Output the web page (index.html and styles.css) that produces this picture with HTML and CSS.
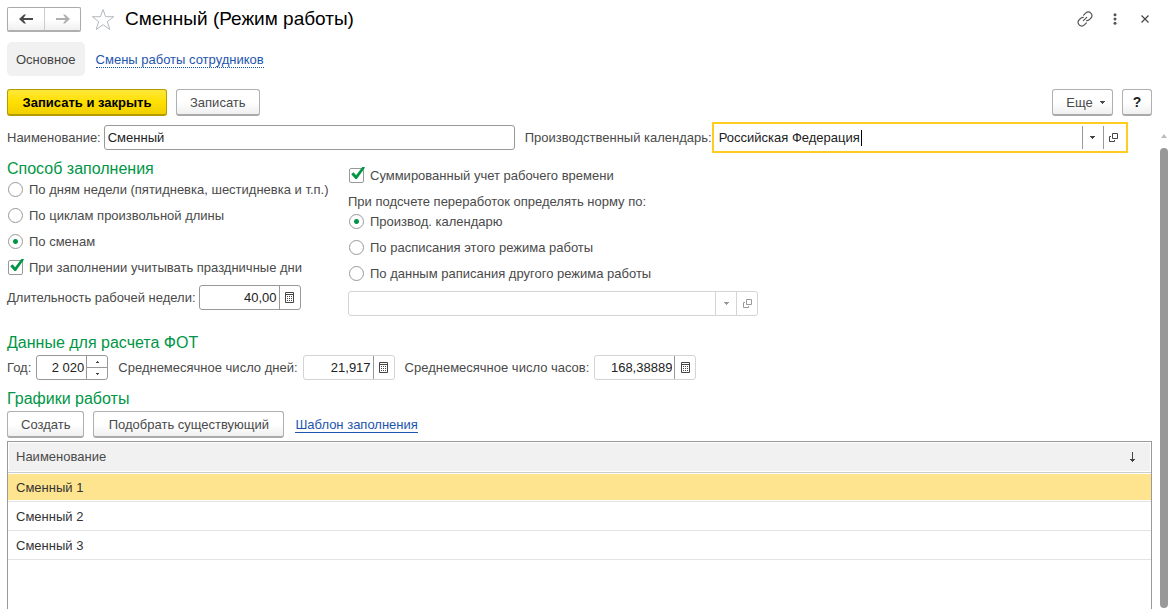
FILE: index.html
```html
<!DOCTYPE html>
<html lang="ru">
<head>
<meta charset="utf-8">
<title>Сменный (Режим работы)</title>
<link rel="stylesheet" href="styles.css">
</head>
<body>
<svg class="defs" aria-hidden="true">
  <symbol id="calc" viewBox="0 0 9 11"><path fill="none" stroke="currentColor" d="M.5.5h8v10h-8zM0 2.500h9"/><path fill="currentColor" d="M2 4h1v1H2zM4 4h1v1H4zM6 4h1v1H6zM2 6h1v1H2zM4 6h1v1H4zM6 6h1v1H6zM2 8h1v1H2zM4 8h1v1H4zM6 8h1v1H6z"/></symbol>
  <symbol id="open" viewBox="0 0 9 9"><path fill="none" stroke="currentColor" d="M3.500.500h5v5h-5zM2 3.500H.500v5h5V7"/></symbol>
  <symbol id="down" viewBox="0 0 5 3"><path fill="currentColor" d="M0 0h5v1H4v1H3v1H2V2H1V1H0z"/></symbol>
  <symbol id="tick" viewBox="0 0 17 17"><path fill="#009646" d="M3.200 8.200l2.300-2 2.600 3L14.300 1h2.400v1L8.900 13H7.500z"/></symbol>
</svg>
<div class="page">
  <header class="titlebar">
    <div class="history">
      <button type="button" aria-label="Назад"><svg width="14" height="10" viewBox="0 0 14 10"><path fill="#4a4a4a" d="M0 5l5-4.500h2L4.500 4H14v2H4.500L7 9.500H5z"/></svg></button>
      <button type="button" aria-label="Вперед"><svg width="14" height="10" viewBox="0 0 14 10"><path fill="#b0b0b0" d="M14 5L9 .5H7L9.500 4H0v2h9.500L7 9.500h2z"/></svg></button>
    </div>
    <button type="button" class="bare" aria-label="В избранное"><svg width="24" height="23" viewBox="0 0 24 23"><path fill="none" stroke="#b3b9c0" d="M12 1.500l2.600 7.200h8.100l-6.400 4.900 2.500 7.900-6.800-4.800-6.800 4.800 2.500-7.900-6.400-4.900h8.100z"/></svg></button>
    <h1>Сменный (Режим работы)</h1>
    <div class="window-tools">
      <button type="button" class="bare" aria-label="Ссылка"><svg width="16" height="16" viewBox="0 0 16 16"><g fill="none" stroke="#555" stroke-width="1.200" stroke-linecap="round"><path d="M6.600 4.200l2.300-2.300a3.300 3.300 0 0 1 4.700 0l.4.400a3.300 3.300 0 0 1 0 4.700l-1.700 1.700a3.300 3.300 0 0 1-2.600 1"/><path d="M9.400 11.800l-2.300 2.300a3.300 3.300 0 0 1-4.700 0l-.4-.4a3.300 3.300 0 0 1 0-4.700l1.700-1.700a3.300 3.300 0 0 1 2.600-1"/><path d="M6.300 9.700l3.400-3.400"/></g></svg></button>
      <button type="button" class="bare" aria-label="Меню"><svg width="4" height="12" viewBox="0 0 4 12"><g fill="#555"><circle cx="2" cy="1.800" r="1.500"/><circle cx="2" cy="6" r="1.500"/><circle cx="2" cy="10.200" r="1.500"/></g></svg></button>
      <button type="button" class="bare" aria-label="Закрыть"><svg width="8" height="8" viewBox="0 0 8 8"><path fill="none" stroke="#444" stroke-width="1.200" d="M.5.5l7 7M7.500.5l-7 7"/></svg></button>
    </div>
  </header>

  <nav class="tabs">
    <a class="tab current">Основное</a>
    <a class="tab-link" href="#shifts">Смены работы сотрудников</a>
  </nav>

  <div class="commands">
    <button type="button" class="btn primary">Записать и закрыть</button>
    <button type="button" class="btn">Записать</button>
    <span class="spacer"></span>
    <button type="button" class="btn more">Еще <svg width="5" height="3"><use href="#down"/></svg></button>
    <button type="button" class="btn help">?</button>
  </div>

  <div class="body">
    <main class="form">
      <div class="fields tight">
        <label for="name">Наименование:</label>
        <div class="box name"><input id="name" type="text" value="Сменный"></div>
        <label class="next" for="calendar">Производственный календарь:</label>
        <div class="box calendar">
          <input id="calendar" type="text" value="Российская Федерация"><span class="caret"></span>
          <button type="button" class="first" aria-label="Выбрать"><svg width="5" height="3"><use href="#down"/></svg></button>
          <button type="button" aria-label="Открыть"><svg width="9" height="9"><use href="#open"/></svg></button>
        </div>
      </div>

      <div class="columns">
        <section class="method">
          <h2>Способ заполнения</h2>
          <label class="choice"><input type="radio" name="fill">По дням недели (пятидневка, шестидневка и т.п.)</label>
          <label class="choice"><input type="radio" name="fill">По циклам произвольной длины</label>
          <label class="choice"><input type="radio" name="fill" checked>По сменам</label>
          <label class="choice"><input type="checkbox" checked><svg class="tick" width="17" height="17"><use href="#tick"/></svg>При заполнении учитывать праздничные дни</label>
          <div class="fields tight week">
            <label for="week">Длительность рабочей недели:</label>
            <div class="box number"><input id="week" type="text" value="40,00"><button type="button" aria-label="Калькулятор"><svg width="9" height="11"><use href="#calc"/></svg></button></div>
          </div>
        </section>
        <section class="overtime">
          <label class="choice"><input type="checkbox" checked><svg class="tick" width="17" height="17"><use href="#tick"/></svg>Суммированный учет рабочего времени</label>
          <p>При подсчете переработок определять норму по:</p>
          <label class="choice"><input type="radio" name="norm" checked>Производ. календарю</label>
          <label class="choice"><input type="radio" name="norm">По расписания этого режима работы</label>
          <label class="choice"><input type="radio" name="norm">По данным раписания другого режима работы</label>
          <div class="box muted other">
            <input type="text" aria-label="Другой режим работы" disabled>
            <button type="button" aria-label="Выбрать" disabled><svg width="5" height="3"><use href="#down"/></svg></button>
            <button type="button" aria-label="Открыть" disabled><svg width="9" height="9"><use href="#open"/></svg></button>
          </div>
        </section>
      </div>

      <h2>Данные для расчета ФОТ</h2>
      <div class="fields">
        <label for="year">Год:</label>
        <div class="box year"><input id="year" type="text" value="2 020">
          <div class="spin">
            <button type="button" aria-label="Больше"><svg width="3" height="2" viewBox="0 0 3 2"><path fill="#444" d="M1 0h1v1h1v1H0V1h1z"/></svg></button>
            <button type="button" aria-label="Меньше"><svg width="3" height="2" viewBox="0 0 3 2"><path fill="#444" d="M0 0h3v1H2v1H1V1H0z"/></svg></button>
          </div>
        </div>
        <label class="next" for="days">Среднемесячное число дней:</label>
        <div class="box pale days"><input id="days" type="text" value="21,917"><button type="button" aria-label="Калькулятор"><svg width="9" height="11"><use href="#calc"/></svg></button></div>
        <label class="next" for="hours">Среднемесячное число часов:</label>
        <div class="box pale number"><input id="hours" type="text" value="168,38889"><button type="button" aria-label="Калькулятор"><svg width="9" height="11"><use href="#calc"/></svg></button></div>
      </div>

      <h2 class="schedules">Графики работы</h2>
      <div class="commands inner">
        <button type="button" class="btn">Создать</button>
        <button type="button" class="btn pick">Подобрать существующий</button>
        <a class="template" href="#template">Шаблон заполнения</a>
      </div>
      <div class="list">
        <table>
          <thead><tr><th><div class="head">Наименование<svg width="7" height="11" viewBox="0 0 7 11"><path fill="#444" d="M3 0h1v7h2v1H5v1H4v1H3V9H2V8H1V7h2z"/></svg></div></th></tr></thead>
          <tbody>
            <tr class="selected"><td>Сменный 1</td></tr>
            <tr><td>Сменный 2</td></tr>
            <tr><td>Сменный 3</td></tr>
          </tbody>
        </table>
      </div>
    </main>
    <div class="scrollbar"><svg width="6" height="4" viewBox="0 0 6 4"><path fill="#bbb" d="M3 0l3 4H0z"/></svg><div class="thumb"></div></div>
  </div>
</div>
</body>
</html>
```

FILE: styles.css
```css
* { box-sizing: border-box; }
body { margin: 0; background: #fff; color: #4a4a4a; font: 13px/16px "Liberation Sans", Arial, sans-serif; }
button, input { font: inherit; color: inherit; margin: 0; padding: 0; }
button { display: flex; align-items: center; justify-content: center; background: none; border: 0; }
svg { display: block; flex: none; }
.defs { position: absolute; width: 0; height: 0; }

.page { display: flex; flex-direction: column; height: 100vh; overflow: hidden; }

.titlebar { display: flex; align-items: center; height: 38px; padding: 0 21px 0 7px; }
.history { display: flex; height: 25px; border: 1px solid #aaa; border-bottom: 2px solid #b0b0b0; border-radius: 2px; background: linear-gradient(#fff 50%, #f0f0f0); }
.history button { width: 36px; }
.history button + button { border-left: 1px solid #ccc; }
.history + .bare { margin: 0 10px; }
h1 { flex: 1; margin: 0; font-size: 19px; line-height: 22px; font-weight: normal; color: #000; }
.window-tools { display: flex; align-items: center; gap: 24px; }
.window-tools .bare:first-child { margin-right: -4px; }

.tabs { display: flex; align-items: center; gap: 11px; margin: 4px 7px 13px; }
.tab { padding: 10px 9px 8px; border-radius: 5px; background: #f1f1f1; color: #444; }
.tab-link { padding-top: 1px; color: #1c55ae; text-decoration: none; border-bottom: 1px dotted #1c55ae; line-height: 15px; }

.commands { display: flex; align-items: center; gap: 9px; padding: 0 18px 0 7px; }
.spacer { flex: 1; }
.btn { height: 27px; padding: 1px 13px 0; border: 1px solid #b0b0b0; border-bottom: 2px solid #aaa; border-radius: 3px; background: linear-gradient(#fff 50%, #f0f0f0); }
.primary { min-width: 160px; border-color: #b59b00; background: linear-gradient(#ffe83a, #ffe000 50%, #f0cf00); color: #000; font-weight: bold; }
.more { gap: 7px; min-width: 61px; padding: 1px 6px 0 12px; }
.help { width: 30px; padding: 0; color: #222; font-size: 14px; font-weight: bold; }
.pick { min-width: 191px; }

.body { display: flex; flex: 1; min-height: 0; margin-top: 6px; }
.form { display: flex; flex-direction: column; flex: 1; padding-left: 7px; }
.fields { display: flex; align-items: center; gap: 5px; }
.tight { gap: 3px; }
.next { margin-left: 5px; }
.tight .next { margin-left: 7px; }
.box { display: flex; height: 25px; border: 1px solid #999; border-radius: 3px; background: #fff; }
.box input { flex: 1; width: 0; min-width: 0; padding: 0 3px; border: 0; outline: 0; background: none; color: #222; }
.box button { width: 21px; border-left: 1px solid #999; color: #444; }
.name { width: 411px; }
.calendar { align-items: center; width: 416px; height: 31px; margin-left: -3px; padding-right: 2px; border: 2px solid #fc2; border-radius: 0; }
.calendar input { flex: none; width: 147px; padding: 0 0 0 5px; }
.caret { width: 1px; height: 16px; background: #000; }
.calendar button { height: 23px; }
.calendar .first { margin-left: auto; }
.number { width: 102px; }
.number input, .days input, .year input { padding: 0 2px; text-align: right; }
.days { width: 92px; }
.year { width: 72px; }
.muted, .pale { border-color: #d4d4d4; }
.muted button { border-color: #d4d4d4; color: #999; }
.spin { display: flex; flex-direction: column; width: 21px; border-left: 1px solid #999; }
.spin button { flex: 1; width: auto; border: 0; }
.spin button + button { border-top: 1px solid #999; }

.columns { display: flex; margin-top: 7px; }
.method { width: 341px; }
h2 { margin: 0; font-size: 16px; line-height: 17px; font-weight: normal; color: #009646; }
.choice { display: flex; align-items: center; height: 26px; }
.choice input { flex: none; appearance: none; width: 15px; height: 15px; margin: 0 6px 1px 1px; border: 1px solid #999; background: #fff; }
.choice input[type="radio"] { border-radius: 50%; }
.choice input[type="radio"]:checked { background: radial-gradient(circle, #009646 2px, #fff 3px); }
.choice input[type="checkbox"] { border-radius: 2px; }
.tick { margin: -3px 5px 0 -22px; }
.week { margin-top: 4px; }
.overtime { padding-top: 3px; }
.overtime p { margin: 5px 0 -1px; line-height: 16px; }
.other { width: 410px; margin-top: 4px; }
.columns + h2 { margin-top: 18px; margin-bottom: 4px; }
.schedules { margin: 10px 0 4px; }
.inner { padding: 0; }
.template { margin-left: 2px; color: #1c55ae; text-decoration: none; border-bottom: 1px solid #1c55ae; line-height: 15px; }

.list { flex: 1; margin: 3px 0 0; border: 1px solid #999; border-bottom: 0; }
table { width: 100%; border-collapse: collapse; }
th { padding: 1px 1px; border-bottom: 1px solid #ccc; font-weight: normal; text-align: left; }
.head { display: flex; align-items: center; justify-content: space-between; height: 28px; padding: 0 14px 0 7px; background: #f1f1f1; }
td { height: 29px; padding: 1px 8px 0; border-bottom: 1px solid #e4e4e4; color: #333; }
.selected td { background: #ffe48f; box-shadow: inset 0 1px #fff, inset 0 -1px #fff; }

.scrollbar { display: flex; flex-direction: column; align-items: center; gap: 10px; width: 18px; padding: 12px 0 1px 6px; }
.thumb { flex: 1; width: 8px; border-radius: 4px; background: #999; }
```
